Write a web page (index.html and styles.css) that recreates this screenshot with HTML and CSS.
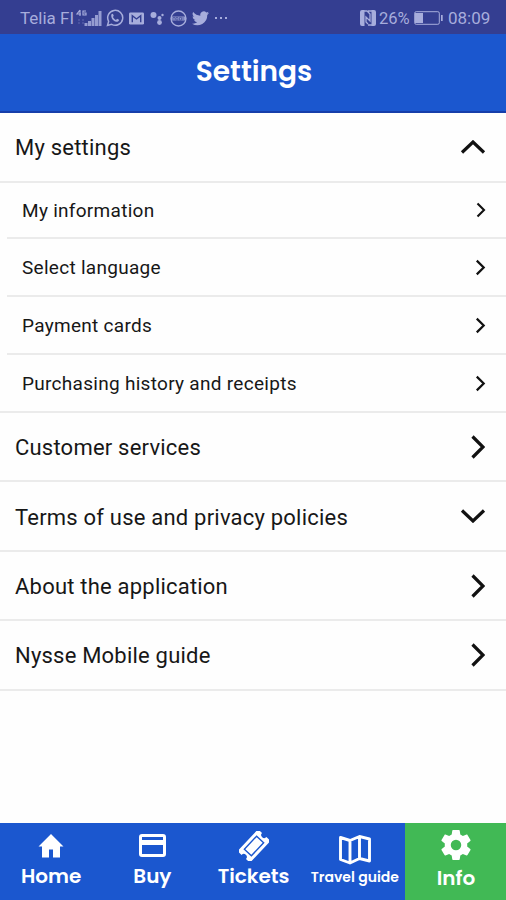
FILE: index.html
```html
<!DOCTYPE html>
<html lang="en">
<head>
<meta charset="utf-8">
<title>Settings</title>
<link rel="stylesheet" href="styles.css">
</head>
<body>
<svg class="defs" width="0" height="0">
  <symbol id="chevron-small" viewBox="0 0 10 16"><path d="M1.500 1.500 8 8 1.500 14.500" fill="none" stroke="#111" stroke-width="2.100"/></symbol>
  <symbol id="chevron-large" viewBox="0 0 14 24"><path d="M1.500 1.500 12 12 1.500 22.500" fill="none" stroke="#111" stroke-width="3.200"/></symbol>
</svg>
<div class="status">
  <span class="carrier">Telia FI</span>
  <svg class="signal" viewBox="0 0 28 18" width="28" height="18"><path d="M4 1 1 5h4M4 1v6M10 2H7v4h3V4H8" fill="none" stroke="currentColor" stroke-width="1.200"/><path d="M2 11h2M6 11h2M2 14h2M6 14h2" fill="none" stroke="currentColor" opacity=".4"/><path d="M8.500 14h3v3h-3zM12 12h3v5h-3zM15.500 9h3v8h-3zM19 6h3v11h-3zM22.500 2h3v15h-3z" opacity=".85"/></svg>
  <svg class="whatsapp" viewBox="0 0 24 24" width="18" height="18"><path d="M2 22l1.500-5.500A10 10 0 1 1 7.500 20.500z" fill="none" stroke="currentColor" stroke-width="2"/><path d="M7 7.500c1-1.500 2-1.500 2.500-.5l.8 2-1 1.500c1 2 2.300 3 4 4l1.500-1.500 2.500 1.200c.3 2-1.800 3-3.500 2.800C10 16.500 6.500 12 7 7.500z"/></svg>
  <svg class="mail" viewBox="0 0 16 13" width="15" height="13"><rect width="16" height="13" rx="1.500"/><path d="M3.500 10.500V3.500L8 7l4.500-3.500v7" fill="none" stroke="#343e91" stroke-width="1.500"/></svg>
  <svg class="assistant" viewBox="0 0 16 16" width="16" height="16"><circle cx="3.500" cy="5" r="3"/><circle cx="9.500" cy="8" r="2"/><circle cx="9.500" cy="12.500" r="2.400"/><circle cx="12.500" cy="5" r="1.200"/></svg>
  <svg class="round" viewBox="0 0 17 17" width="17" height="17"><circle cx="8.500" cy="8.500" r="7.500" fill="none" stroke="currentColor" stroke-width="1.300"/><path d="M1 6.500h15v4H1z" opacity=".85"/><path d="M3 10V7.500h2V10M6 7.500h2V10H6zM9.500 7.500h2V10h-2zM13 7v3" fill="none" stroke="#343e91" stroke-width=".6"/></svg>
  <svg class="bird" viewBox="0 0 24 20" width="17" height="15"><path d="M23.950 2.400a10 10 0 0 1-2.800.8A5 5 0 0 0 23.300.4a10 10 0 0 1-3.100 1.200 4.900 4.900 0 0 0-8.400 4.500A14 14 0 0 1 1.700.9a4.900 4.900 0 0 0 1.500 6.600A5 5 0 0 1 1 6.900a4.900 4.900 0 0 0 3.900 4.900 5 5 0 0 1-2.200.1 4.900 4.900 0 0 0 4.600 3.400A9.900 9.900 0 0 1 0 17.300 14 14 0 0 0 21.500 4.900a10 10 0 0 0 2.450-2.500z"/></svg>
  <svg class="dots" viewBox="0 0 14 4" width="14" height="4"><path d="M1 1h2v2H1zM6 1h2v2H6zM11 1h2v2h-2z"/></svg>
  <svg class="nfc" viewBox="0 0 16 16" width="16" height="16"><path d="M2 0h2.500v16H2a2 2 0 0 1-2-2V2a2 2 0 0 1 2-2zM11.500 0H14a2 2 0 0 1 2 2v12a2 2 0 0 1-2 2h-2.500z"/><path d="M4 1h3l3 3v7L6 7v5l2 2M8 1h4M8 15h4" fill="none" stroke="currentColor" stroke-width="1.300"/></svg>
  <span class="percent">26%</span>
  <svg class="battery" viewBox="0 0 29 14" width="29" height="14"><rect x=".7" y=".7" width="24.600" height="12.600" rx="1.500" fill="none" stroke="currentColor" stroke-width="1"/><path d="M1 2h8v10H1zM27 4h1.700v6H27z"/></svg>
  <span class="clock">08:09</span>
</div>
<header class="header"><h1>Settings</h1></header>
<main class="list">
  <div class="row main first"><span>My settings</span><svg class="up" width="26" height="14" viewBox="0 0 26 14"><path d="M2 12.500 13 2l11 10.500" fill="none" stroke="#111" stroke-width="3.200"/></svg></div>
  <div class="row sub r1"><span>My information</span><svg width="10" height="16"><use href="#chevron-small"/></svg></div>
  <div class="row sub"><span>Select language</span><svg width="11" height="17"><use href="#chevron-small"/></svg></div>
  <div class="row sub"><span>Payment cards</span><svg width="11" height="17"><use href="#chevron-small"/></svg></div>
  <div class="row sub last"><span>Purchasing history and receipts</span><svg width="11" height="17"><use href="#chevron-small"/></svg></div>
  <div class="row main"><span>Customer services</span><svg width="14" height="24"><use href="#chevron-large"/></svg></div>
  <div class="row main tall"><span>Terms of use and privacy policies</span><svg class="down" width="26" height="14" viewBox="0 0 26 14"><path d="M2 1.500 13 12 24 1.500" fill="none" stroke="#111" stroke-width="3.200"/></svg></div>
  <div class="row main"><span>About the application</span><svg width="14" height="24"><use href="#chevron-large"/></svg></div>
  <div class="row main tall"><span>Nysse Mobile guide</span><svg width="14" height="24"><use href="#chevron-large"/></svg></div>
</main>
<nav class="nav">
  <a class="tab"><svg viewBox="0 0 26 24" width="26" height="24"><path d="M13 0 .5 12.500H4V23.500h7v-8h4v8h7v-11h3.500z"/></svg><span>Home</span></a>
  <a class="tab"><svg viewBox="0 0 27 23" width="27" height="23"><path fill-rule="evenodd" d="M3 0h21a3 3 0 0 1 3 3v17a3 3 0 0 1-3 3H3a3 3 0 0 1-3-3V3a3 3 0 0 1 3-3zm0 3v3h21V3zm0 8v9h21v-9z"/></svg><span>Buy</span></a>
  <a class="tab"><svg class="ticket" viewBox="0 0 30 30" width="30" height="30"><g transform="rotate(-47 15 15)"><path d="M1.500 6.500h27a1.500 1.500 0 0 1 1.500 1.500v4a3 3 0 0 0 0 6v4a1.500 1.500 0 0 1-1.500 1.500h-27A1.500 1.500 0 0 1 0 22v-4a3 3 0 0 0 0-6V8a1.500 1.500 0 0 1 1.500-1.500z"/><rect x="6" y="10.200" width="18" height="9.600" fill="none" stroke="#1b57cf" stroke-width="1.400"/></g></svg><span>Tickets</span></a>
  <a class="tab travel"><svg viewBox="0 0 32 30" width="32" height="30"><path d="M1.500 2.500 11 5.500 20.500 1.500l10 2.500V26l-10-2.500L11 28 1.500 24.500zM11 5.500v22M20.500 2v21.500" fill="none" stroke="#fff" stroke-width="2.900" stroke-linejoin="round"/></svg><span>Travel guide</span></a>
  <a class="tab active"><svg viewBox="2 2 20 20" width="30" height="30"><path d="M19.430 12.980c.04-.32.07-.64.07-.98s-.03-.66-.07-.98l2.110-1.650c.19-.15.24-.42.12-.64l-2-3.460c-.12-.22-.39-.3-.61-.22l-2.490 1c-.52-.4-1.080-.73-1.690-.98l-.38-2.650C14.460 2.180 14.250 2 14 2h-4c-.25 0-.46.18-.49.42l-.38 2.650c-.61.25-1.170.59-1.690.98l-2.490-1c-.23-.09-.49 0-.61.22l-2 3.460c-.13.22-.07.49.12.64l2.110 1.650c-.04.32-.07.65-.07.98s.03.66.07.98l-2.110 1.650c-.19.15-.24.42-.12.64l2 3.460c.12.22.39.3.61.22l2.490-1c.52.4 1.080.73 1.690.98l.38 2.650c.03.24.24.42.49.42h4c.25 0 .46-.18.49-.42l.38-2.650c.61-.25 1.170-.59 1.690-.98l2.490 1c.23.09.49 0 .61-.22l2-3.460c.12-.22.07-.49-.12-.64zM12 15.500A3.500 3.500 0 1 1 12 8.500a3.500 3.500 0 0 1 0 7z"/></svg><span>Info</span></a>
</nav>
</body>
</html>
```
FILE: styles.css
```css
* { box-sizing: border-box; }
body { margin: 0; width: 506px; height: 900px; overflow: hidden; display: flex; flex-direction: column; background: #fefefe; font-family: Roboto, "Liberation Sans", sans-serif; color: #171717; }
.defs { display: block; height: 0; }
svg { display: block; flex: none; }
.status { height: 34px; flex: none; display: flex; align-items: center; padding: 2px 16px 0 20px; background: #343e91; color: #a7addc; font-size: 17px; }
.status svg { fill: currentColor; }
.status span { white-space: nowrap; }
.carrier { width: 55px; }
.signal { margin-left: 1px; }
.whatsapp { margin-left: 2px; }
.mail { margin-left: 5px; }
.assistant { margin-left: 6px; }
.round { margin-left: 4px; }
.bird { margin-left: 5px; }
.dots { margin-left: 5px; }
.nfc { margin-left: auto; margin-right: 3px; }
.percent { width: 32px; font-size: 16.500px; }
.battery { margin-left: 3px; }
.clock { width: 42px; margin-left: 5px; font-size: 17px; }
.header { height: 79px; flex: none; display: flex; justify-content: center; align-items: center; padding: 0 0 2px 2px; background: #1b57cf; border-bottom: 2px solid #163eaa; color: #fff; }
h1 { margin: 0; font: 600 28px/36px "Poppins", Inter, sans-serif; }
.list { flex: 1; }
.row { display: flex; justify-content: space-between; align-items: center; border-bottom: 2px solid #ebebeb; white-space: nowrap; }
.row.main { height: 69px; padding: 0 21px 0 15px; font-size: 22px; letter-spacing: .21px; }
.row.main span { padding-top: 2px; }
.row.main.first span { padding-top: 1px; }
.row.main:last-child span { padding-top: 0; }
.row.first, .row.tall { height: 70px; }
.up, .down { margin-right: -1px; }
.row.sub { height: 58px; margin-left: 7px; padding: 0 20px 0 15px; font-size: 19px; letter-spacing: .29px; }
.row.sub span { padding-top: 1px; }
.row.r1 { height: 56px; }
.row.last { margin-left: 0; padding-left: 22px; }
.nav { height: 77px; flex: none; display: grid; grid-template-columns: repeat(4, 101.250px) 1fr; background: #1b57cf; color: #fff; font: 600 20px/26px "Poppins", Inter, sans-serif; }
.tab { display: flex; flex-direction: column; align-items: center; padding: 11px 0 0 1px; white-space: nowrap; }
.tab svg { fill: #fff; }
.tab span { margin-top: 5px; }
.tab:nth-child(2) span { margin-top: 6px; }
.tab:nth-child(3) { padding-top: 8px; }
.tab:nth-child(3) span { margin-top: 2px; }
.travel { font-size: 14px; padding-top: 12px; }
.tab.travel span { margin-top: -1px; }
.active { padding-top: 7px; background: #41b955; }
.active span { margin-top: 5px; }
```
